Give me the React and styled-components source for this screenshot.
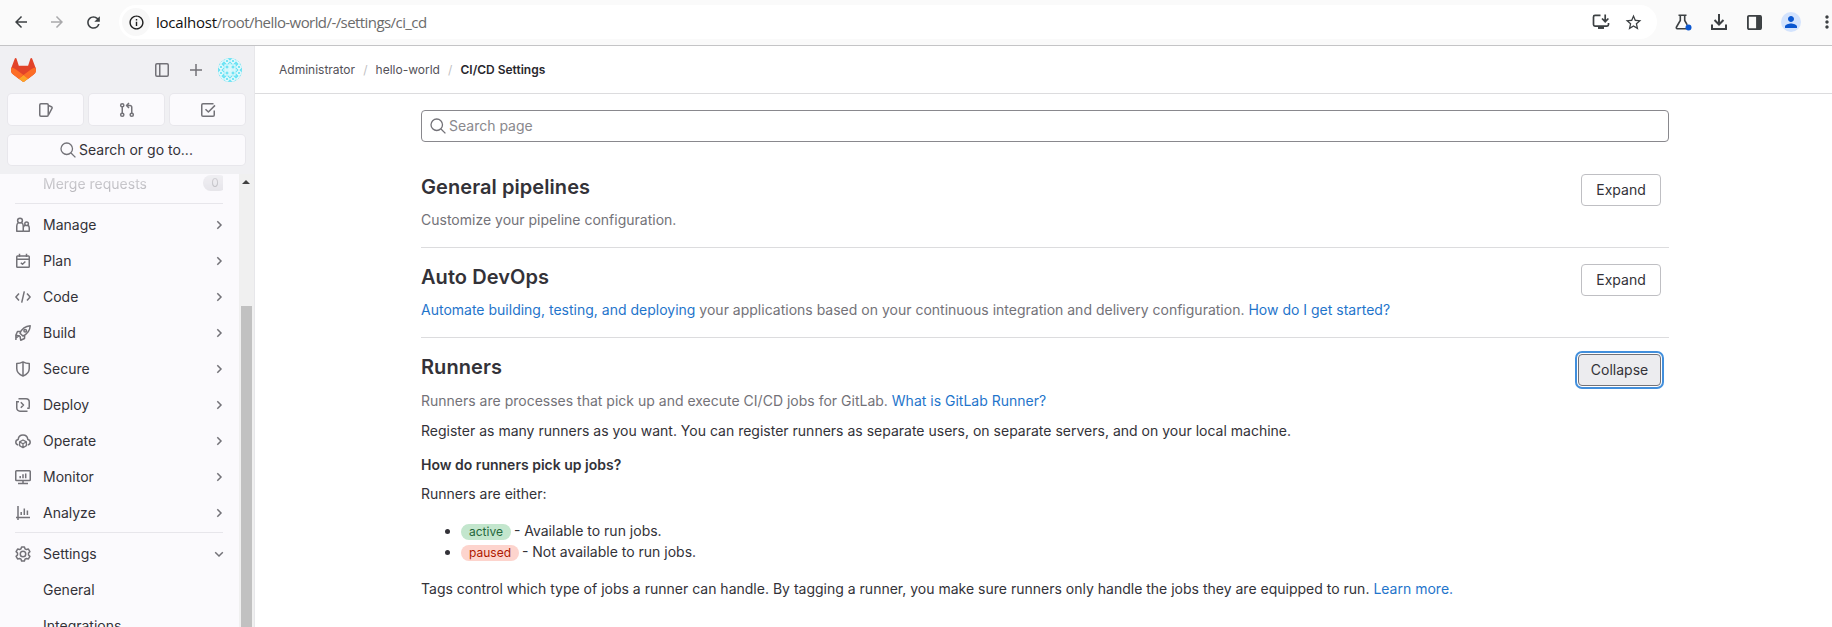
import React from 'react';
import styled, { createGlobalStyle, css } from 'styled-components';
import { MdArrowBack, MdArrowForward, MdRefresh, MdInfoOutline, MdStarBorder, MdPerson, MdMoreVert } from 'react-icons/md';

const Global = createGlobalStyle`
  * { box-sizing: border-box; }
  body { margin: 0; background: #fff; overflow: hidden; }
  h2, p, ul { margin: 0; padding: 0; }
`;

const Page = styled.div`
  display: flex;
  flex-direction: column;
  height: 627px;
  overflow: hidden;
  font: 14px/20px Inter, "Liberation Sans", sans-serif;
  color: #333238;
`;

/* Browser toolbar */
const BrowserBar = styled.header`
  display: flex;
  align-items: center;
  height: 46px;
  flex: none;
  padding: 0 0 1px 12px;
  background: #fafafa;
  border-bottom: 1px solid #c4c4c6;
  color: #3c4043;
  svg { display: block; flex: none; }
`;
const NavIcons = styled.div`
  display: flex;
  gap: 18px;
  width: 107px;
  flex: none;
`;
const Dim = styled.span`color: #a9a9ab;`;
const Omnibox = styled.div`
  display: flex;
  align-items: center;
  width: 1538px;
  height: 34px;
  flex: none;
  padding: 0 14px 0 3px;
  border-radius: 17px;
  background: #fff;
`;
const SiteInfo = styled.span`
  display: grid;
  place-items: center;
  width: 28px;
  height: 28px;
  margin-right: 6px;
  border-radius: 50%;
  background: #f8f8f8;
  color: #1f1f1f;
`;
const Url = styled.span`
  flex: 1;
  padding-bottom: 1px;
  font: 15px/20px "Open Sans", "Noto Sans", sans-serif;
  letter-spacing: -0.57px;
  color: #6b6b6b;
  b { font-weight: 400; letter-spacing: -0.22px; color: #111; }
`;
const OmniActions = styled.div`
  display: flex;
  align-items: center;
  gap: 14px;
`;
const Extensions = styled.div`
  display: flex;
  align-items: center;
  gap: 18px;
  margin-left: 17px;
`;
const Profile = styled.span`
  display: grid;
  place-items: center;
  width: 20px;
  height: 20px;
  margin-right: -2px;
  border-radius: 50%;
  background: #d3e3fd;
  color: #0b57d0;
`;

/* Sidebar */
const Body = styled.div`display: flex; flex: 1; min-height: 0;`;
const Sidebar = styled.aside`
  display: flex;
  flex-direction: column;
  width: 255px;
  flex: none;
  border-right: 1px solid #e7e7ea;
  background: #fbfafd;
`;
const SideHeader = styled.div`
  height: 128px;
  flex: none;
  padding: 12px 8px 0;
  background: #f0f0f3;
  color: #737278;
  svg { display: block; }
`;
const TopRow = styled.div`
  display: flex;
  align-items: center;
  height: 24px;
  padding: 0 4px 0 3px;
`;
const TopTools = styled.div`
  display: flex;
  align-items: center;
  gap: 18px;
  margin-left: auto;
`;
const Avatar = styled.span`margin-left: -4px;`;
const tile = css`
  display: flex;
  align-items: center;
  justify-content: center;
  height: 31px;
  border-radius: 4px;
  background: #fbfafd;
  box-shadow: 0 0 0 1px #e8e7ec;
`;
const Shortcuts = styled.div`
  display: grid;
  grid-template-columns: repeat(3, 1fr);
  gap: 6px;
  width: 237px;
  margin-top: 12px;
`;
const Shortcut = styled.div`${tile}`;
const SearchGo = styled.div`
  ${tile}
  gap: 3px;
  width: 237px;
  height: 30px;
  margin-top: 10px;
  color: #333238;
  svg { color: #737278; }
`;
const NavArea = styled.div`display: flex; flex: 1; min-height: 0; overflow: hidden;`;
const NavList = styled.nav`flex: 1; padding: 0 16px 0 15px; overflow: hidden;`;
const Faded = styled.div`
  display: flex;
  justify-content: space-between;
  align-items: center;
  height: 20px;
  margin-bottom: 9px;
  padding: 0 0 0 28px;
  color: #b4b3b8;
  -webkit-mask-image: linear-gradient(rgba(0,0,0,.45), #000);
`;
const Count = styled.span`
  width: 24px;
  height: 16px;
  margin: -3px -4px 0 0;
  border-radius: 8px;
  background: #e4e3e8;
  font-size: 12px;
  line-height: 16px;
  text-align: center;
`;
const Rule = styled.div`height: 1px; background: #e7e6eb;`;
const Item = styled.div`
  display: flex;
  align-items: center;
  height: 36px;
  color: #333238;
  svg { display: block; color: #737278; margin-top: -1px; }
  svg:last-child { margin-left: auto; margin-top: 0; }
`;
const ItemLabel = styled.span`margin-left: ${p => (p.$sub ? 28 : 12)}px;`;
const Group = styled.div`padding: ${p => p.$pad};`;
const Scrollbar = styled.div`
  width: 15px;
  flex: none;
  padding: 6px 2px 0;
  background: #f0f0f0;
`;
const ScrollUp = styled.div`
  width: 0;
  height: 0;
  margin: 0 0 122px 1px;
  border: 4px solid transparent;
  border-top-width: 0;
  border-bottom-color: #404040;
`;
const Thumb = styled.div`width: 11px; height: 400px; background: #c1c1c1;`;

/* Main content */
const Main = styled.main`flex: 1; min-width: 0; background: #fff;`;
const Crumbs = styled.div`
  display: flex;
  align-items: center;
  height: 48px;
  padding-left: 24px;
  border-bottom: 1px solid #dcdcde;
  font-size: 12px;
  color: #535158;
  b { font-weight: 600; color: #28272d; }
  i { width: 20.5px; text-align: center; font-style: normal; color: #bfbfc3; }
`;
const Content = styled.div`width: 1248px; margin: 16px 0 0 166px;`;
const SearchBox = styled.div`
  display: flex;
  align-items: center;
  gap: 3px;
  height: 32px;
  padding: 0 8px;
  border: 1px solid #89888d;
  border-radius: 4px;
  color: #89888d;
  svg { color: #737278; }
`;
const Section = styled.section`
  height: ${p => (p.$open ? 280 : 90)}px;
  padding-top: 16px;
  border-bottom: ${p => (p.$open ? 0 : 1)}px solid #dcdcde;
`;
const SectionHead = styled.div`
  display: flex;
  justify-content: space-between;
  height: 36px;
  padding-right: 8px;
`;
const Title = styled.h2`
  font-size: 20px;
  line-height: 26px;
  font-weight: 600;
  letter-spacing: 0.07px;
`;
const Button = styled.button`
  width: ${p => (p.$active ? 83 : 80)}px;
  height: 32px;
  padding: 0;
  border: 1px solid ${p => (p.$active ? '#737278' : '#bfbfc3')};
  border-radius: 4px;
  background: ${p => (p.$active ? '#ececef' : '#fff')};
  box-shadow: ${p => (p.$active ? '0 0 0 1px #fff, 0 0 0 3px #428fdc' : 'none')};
  color: #333238;
  font: inherit;
`;
const Text = styled.p`
  height: 20px;
  margin-top: ${p => p.$top || 0}px;
  white-space: nowrap;
  letter-spacing: 0.004px;
  color: ${p => (p.$muted ? '#737278' : '#333238')};
  font-weight: ${p => (p.$strong ? 600 : 400)};
`;
const Link = styled.a`color: #1f75cb;`;
const List = styled.ul`margin-top: 16px; padding-left: 40px;`;
const Entry = styled.li`height: 21px; line-height: 21px;`;
const Badge = styled.span`
  display: inline-block;
  height: 16px;
  margin-right: -1px;
  padding: 0 8px;
  border-radius: 8px;
  font-size: 12px;
  line-height: 16px;
  background: ${p => (p.$tone === 'success' ? '#c3e6cd' : '#fdd4cd')};
  color: ${p => (p.$tone === 'success' ? '#24663b' : '#ae1800')};
`;

/* Icons on a 16px grid */
const Svg = ({ size = 16, sw = 1.5, children }) => (
  <svg width={size} height={size} viewBox="0 0 16 16" fill="none" stroke="currentColor" strokeWidth={sw} strokeLinejoin="round">
    {children}
  </svg>
);
const icons = {
  panel: <><rect x="1.75" y="1.75" width="12.5" height="12.5" rx="1.2" /><path d="M5.75 2v12" /></>,
  plus: <path d="M8 2v12M2 8h12" />,
  issues: <><rect x="1.75" y="1.75" width="8.5" height="12.5" rx="1.2" /><path d="M10.5 3.5l2.9 1.2c.6.3.9.9.7 1.5L10.5 13" /></>,
  merge: <><circle cx="3.25" cy="3.25" r="1.6" /><circle cx="3.25" cy="12.75" r="1.6" /><circle cx="12.75" cy="12.75" r="1.6" /><path d="M3.25 5v6M12.75 11V5.2c0-1-.7-1.7-1.7-1.7H8M10 1L7.5 3.5 10 6" /></>,
  todo: <><path d="M14.25 8.5v4.5c0 .7-.5 1.25-1.25 1.25H3c-.7 0-1.25-.5-1.25-1.25V3c0-.7.5-1.25 1.25-1.25h10.5" /><path d="M5.5 7.2L8.4 10 15 3.4" /></>,
  search: <><circle cx="6.75" cy="6.75" r="5.75" /><path d="M11 11l4.4 4.4" /></>,
  manage: <><circle cx="5" cy="3.6" r="2.4" /><path d="M3.4 5.6C2.3 6.300 1.75 7.500 1.75 9v5.250h6.500V9c0-1.500-.6-2.700-1.700-3.400" /><circle cx="11.600" cy="6.800" r="1.800" /><path d="M8.500 14.250h5.750v-3.400c0-1.200-.5-2.100-1.400-2.600M8.600 10c.2-.8.700-1.400 1.500-1.800" /></>,
  plan: <><rect x="1.75" y="3" width="12.5" height="11.25" rx=".8" /><path d="M4.5 .8V4M11.5 .8V4M2 6.3h12M5.8 9.7l1.7 1.5 2.9-2.7" /></>,
  code: <path d="M4 4.5L.9 8 4 11.5M12 4.5L15.1 8 12 11.5M9.3 2.3L6.7 13.7" />,
  build: <><path d="M5 8.2C6.6 4.5 10 1.2 15.2.8c-.2 5-3.6 8.500-7.300 10.200zM6 6.300L2.500 6.500.800 10.300 5 11M9.700 10l-.2 3.500-3.800 1.700L5 11M3.800 10.800L1 13M.9 10.500v4.600" /><circle cx="10.200" cy="5.800" r="1.300" /></>,
  secure: <path d="M8 .9C6 2 4 2.500 1.750 2.500V7.500c0 3.500 2.500 6 6.250 7.600 3.750-1.600 6.250-4.100 6.250-7.600v-5C12 2.500 10 2 8 .9zM8 1v14" />,
  deploy: <><path d="M3.500 1.750H11c1.800 0 3.250 1.400 3.250 3.250v5.500M14.700 11.250h-2.500M12.500 14.250H5c-1.800 0-3.250-1.400-3.250-3.250V5.500M1 4.750h3M5.800 5.300L8.500 8l-2.700 2.700" /></>,
  operate: <><path d="M3.300 12C1.800 11.700.8 10.600.8 9.200c0-1.500 1-2.600 2.400-2.800C3.500 3.800 5.500 2 8 2s4.500 1.800 4.800 4.400c1.400.2 2.400 1.300 2.400 2.800 0 1.400-1 2.500-2.500 2.800" /><path d="M8 7l3.400 1.900v3.700L8 14.700l-3.400-2.100V8.900zM4.800 9L8 10.800 11.200 9M8 10.800v3.700" strokeWidth="1.300" /></>,
  monitor: <><rect x=".75" y="1.750" width="14.500" height="9.800" rx=".8" /><path d="M8 11.500v3M3 14.500h10M5.200 9.200V7M8 9.200V5.200M10.700 9.200V4.500" /></>,
  analyze: <path d="M3 1v14M1 12.500h14M6.200 10V7M9.300 10V3.500M12.400 10V5.500" />,
  settings: <><path d="M6.600.9h2.800l.6 1.900 1.400.8 2-.5 1.500 2.500L13.500 7v2l1.400 1.400-1.500 2.500-2-.5-1.400.8-.6 1.900H6.600L6 13.200l-1.400-.8-2 .5-1.500-2.500L2.500 9V7L1.100 5.600l1.500-2.500 2 .5L6 2.800z" /><circle cx="8" cy="8" r="2.750" /></>,
};
const Icon = ({ name, ...rest }) => <Svg {...rest}>{icons[name]}</Svg>;
const Chevron = ({ down }) => (
  <svg width="8" height="12" viewBox="0 0 8 12" fill="none" stroke="currentColor" strokeWidth="1.5" overflow="visible">
    <path d={down ? 'M.2 4.200L4 8l3.800-3.800' : 'M2.300 2.300L6 6 2.300 9.700'} />
  </svg>
);

const Tanuki = () => (
  <svg width="25" height="24" viewBox="0 0 25 24">
    <path d="m24.507 9.5-.034-.09L21.082.562a.896.896 0 0 0-1.694.091l-2.29 7.01H7.825L5.535.653a.898.898 0 0 0-1.694-.09L.451 9.411.416 9.5a6.297 6.297 0 0 0 2.09 7.278l.012.01.03.022 5.16 3.867 2.56 1.935 1.554 1.176a1.051 1.051 0 0 0 1.268 0l1.555-1.176 2.56-1.935 5.197-3.89.014-.01A6.297 6.297 0 0 0 24.507 9.5Z" fill="#E24329" />
    <path d="m24.507 9.5-.034-.09a11.44 11.44 0 0 0-4.56 2.051l-7.447 5.632 4.742 3.584 5.197-3.89.014-.01A6.297 6.297 0 0 0 24.507 9.5Z" fill="#FC6D26" />
    <path d="m7.707 20.677 2.56 1.935 1.555 1.176a1.051 1.051 0 0 0 1.268 0l1.555-1.176 2.56-1.935-4.743-3.584-4.755 3.584Z" fill="#FCA326" />
    <path d="M5.01 11.461a11.43 11.43 0 0 0-4.56-2.05L.416 9.5a6.297 6.297 0 0 0 2.09 7.278l.012.01.03.022 5.16 3.867 4.745-3.584-7.444-5.632Z" fill="#FC6D26" />
  </svg>
);

/* Generated user avatar: four-fold symmetric tile pattern */
const Identicon = () => (
  <svg width="24" height="24" viewBox="0 0 24 24">
    <clipPath id="avatar"><circle cx="12" cy="12" r="12" /></clipPath>
    <g clipPath="url(#avatar)">
      <rect width="24" height="24" fill="#6fe3f4" />
      <g fill="none" stroke="#f4fdfe" strokeWidth="1.1">
        {[3, 9, 15, 21].map(x => [3, 9, 15, 21].map(y => {
          const inner = x > 6 && x < 18 && y > 6 && y < 18;
          return inner
            ? <rect key={x + '-' + y} x={x - 2} y={y - 2} width="4" height="4" />
            : <path key={x + '-' + y} d={`M${x} ${y - 2.4}l2.400 2.400-2.400 2.400-2.400-2.400z`} />;
        }))}
        <path d="M12 5v14M5 12h14" />
      </g>
    </g>
  </svg>
);

const InstallIcon = () => (
  <svg width="18" height="16" viewBox="0 0 18 16" fill="none" stroke="currentColor" strokeWidth="1.7">
    <path d="M8.500 1.400H3c-.9 0-1.500.6-1.500 1.500v7.700c0 .9.600 1.500 1.500 1.500h12c.9 0 1.500-.6 1.500-1.500V9M13.200.5v6.500M10 4.500l3.200 3.200 3.200-3.200" />
    <path d="M6 13.700h6" strokeWidth="2.500" />
  </svg>
);
const FlaskIcon = () => (
  <svg width="18" height="18" viewBox="0 0 18 18" fill="none" stroke="currentColor" strokeWidth="1.600">
    <path d="M4.500 2.300h8M6.300 2.500v5L2.500 14c-.5.900-.1 1.700.8 1.700h9M10.700 2.500v5l2.500 4.300" />
    <circle cx="14.500" cy="14.500" r="3" fill="#0b57d0" stroke="none" />
  </svg>
);
const DownloadIcon = () => (
  <svg width="18" height="18" viewBox="0 0 18 18" fill="none" stroke="currentColor" strokeWidth="2">
    <path d="M9 1v10M4.500 7L9 11.500 13.500 7M2 11.500V16h14v-4.500" />
  </svg>
);
const SidePanelIcon = () => (
  <svg width="17" height="17" viewBox="0 0 16 16">
    <rect x="1.800" y="1.800" width="12.400" height="12.400" rx="1" fill="none" stroke="currentColor" strokeWidth="1.700" />
    <path d="M9.500 1.500H14v13H9.500z" fill="currentColor" />
  </svg>
);

const menu = [
  ['Manage', 'manage'], ['Plan', 'plan'], ['Code', 'code'], ['Build', 'build'], ['Secure', 'secure'],
  ['Deploy', 'deploy'], ['Operate', 'operate'], ['Monitor', 'monitor'], ['Analyze', 'analyze'],
];

export default function App() {
  return (
    <Page>
      <Global />
      <BrowserBar>
        <NavIcons>
          <MdArrowBack size={18} />
          <Dim><MdArrowForward size={18} /></Dim>
          <MdRefresh size={19} />
        </NavIcons>
        <Omnibox>
          <SiteInfo><MdInfoOutline size={17} /></SiteInfo>
          <Url><b>localhost</b>/root/hello-world/-/settings/ci_cd</Url>
          <OmniActions><InstallIcon /><MdStarBorder size={19} /></OmniActions>
        </Omnibox>
        <Extensions>
          <FlaskIcon />
          <DownloadIcon />
          <SidePanelIcon />
          <Profile><MdPerson size={18} /></Profile>
          <MdMoreVert size={20} />
        </Extensions>
      </BrowserBar>
      <Body>
        <Sidebar>
          <SideHeader>
            <TopRow>
              <Tanuki />
              <TopTools><Icon name="panel" /><Icon name="plus" /><Avatar><Identicon /></Avatar></TopTools>
            </TopRow>
            <Shortcuts>
              <Shortcut><Icon name="issues" /></Shortcut>
              <Shortcut><Icon name="merge" /></Shortcut>
              <Shortcut><Icon name="todo" /></Shortcut>
            </Shortcuts>
            <SearchGo><Icon name="search" sw={1.3} />Search or go to...</SearchGo>
          </SideHeader>
          <NavArea>
            <NavList>
              <Faded>Merge requests<Count>0</Count></Faded>
              <Rule />
              <Group $pad="3px 0 1px">
                {menu.map(([label, icon]) => (
                  <Item key={label}><Icon name={icon} /><ItemLabel>{label}</ItemLabel><Chevron /></Item>
                ))}
              </Group>
              <Rule />
              <Group $pad="3px 0 0">
                <Item><Icon name="settings" /><ItemLabel>Settings</ItemLabel><Chevron down /></Item>
                <Item><ItemLabel $sub>General</ItemLabel></Item>
                <Item><ItemLabel $sub>Integrations</ItemLabel></Item>
              </Group>
            </NavList>
            <Scrollbar><ScrollUp /><Thumb /></Scrollbar>
          </NavArea>
        </Sidebar>
        <Main>
          <Crumbs>Administrator<i>/</i>hello-world<i>/</i><b>CI/CD Settings</b></Crumbs>
          <Content>
            <SearchBox><Icon name="search" sw={1.3} />Search page</SearchBox>
            <Group $pad="16px 0 0">
              <Section>
                <SectionHead><Title>General pipelines</Title><Button>Expand</Button></SectionHead>
                <Text $muted>Customize your pipeline configuration.</Text>
              </Section>
              <Section>
                <SectionHead><Title>Auto DevOps</Title><Button>Expand</Button></SectionHead>
                <Text $muted>
                  <Link>Automate building, testing, and deploying</Link> your applications based on your continuous integration and delivery configuration. <Link>How do I get started?</Link>
                </Text>
              </Section>
              <Section $open>
                <SectionHead><Title>Runners</Title><Button $active>Collapse</Button></SectionHead>
                <Text $muted $top={1}>Runners are processes that pick up and execute CI/CD jobs for GitLab. <Link>What is GitLab Runner?</Link></Text>
                <Text $top={10}>Register as many runners as you want. You can register runners as separate users, on separate servers, and on your local machine.</Text>
                <Text $strong $top={14}>How do runners pick up jobs?</Text>
                <Text $top={9}>Runners are either:</Text>
                <List>
                  <Entry><Badge $tone="success">active</Badge> - Available to run jobs.</Entry>
                  <Entry><Badge $tone="danger">paused</Badge> - Not available to run jobs.</Entry>
                </List>
                <Text $top={17}>Tags control which type of jobs a runner can handle. By tagging a runner, you make sure runners only handle the jobs they are equipped to run. <Link>Learn more.</Link></Text>
              </Section>
            </Group>
          </Content>
        </Main>
      </Body>
    </Page>
  );
}
